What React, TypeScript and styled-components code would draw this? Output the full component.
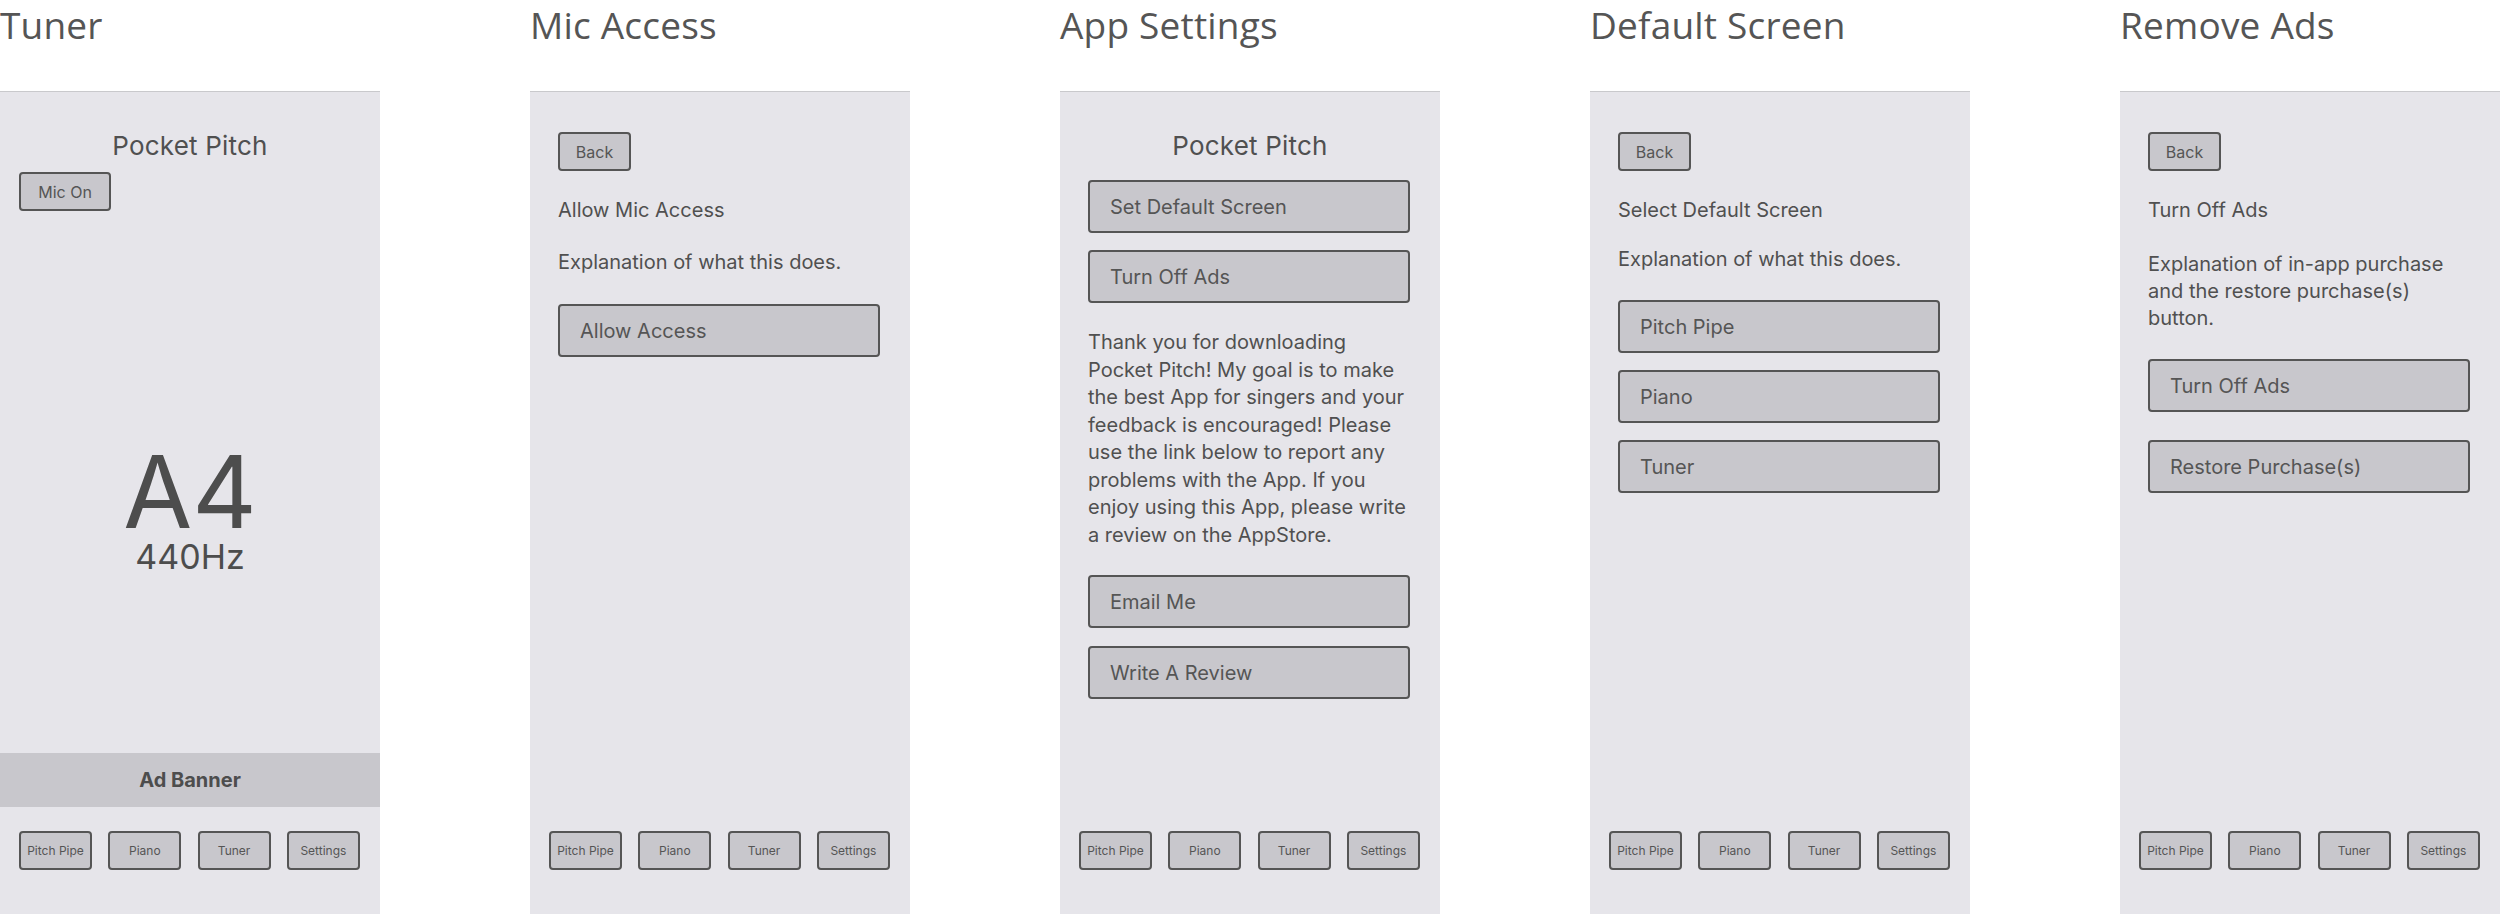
import styled, { createGlobalStyle } from "styled-components";

const GlobalStyle = createGlobalStyle`
  html, body {
    margin: 0;
    padding: 0;
    background: #ffffff;
  }
  body {
    font-family: Inter, "Liberation Sans", sans-serif;
    color: #505050;
  }
`;

const Board = styled.div`
  display: flex;
  gap: 150px;
  align-items: flex-start;
  width: 2500px;
  height: 915px;
  overflow: hidden;
`;

const Column = styled.section`
  width: 380px;
  flex-shrink: 0;
  display: flex;
  flex-direction: column;
`;

const ColumnTitle = styled.h1`
  margin: 0;
  height: 91px;
  font-family: "Open Sans", Lato, sans-serif;
  font-weight: 400;
  font-size: 37px;
  line-height: 50px;
  color: #555555;
  letter-spacing: 0.2px;
`;

const Phone = styled.div`
  height: 823px;
  box-sizing: border-box;
  background: #e6e5ea;
  border-top: 1px solid #c9c9cc;
  display: flex;
  flex-direction: column;
`;

const AppName = styled.div`
  margin-top: 38px;
  text-align: center;
  font-size: 26px;
  line-height: 32px;
  color: #505050;
  letter-spacing: 0.2px;
`;

const SmallButton = styled.div<{ $width: number; $mt: number; $ml: number }>`
  box-sizing: border-box;
  width: ${(p) => p.$width}px;
  height: 39px;
  margin-top: ${(p) => p.$mt}px;
  margin-left: ${(p) => p.$ml}px;
  border: 2px solid #555555;
  border-radius: 4px;
  background: #c8c7cc;
  display: flex;
  align-items: center;
  justify-content: center;
  font-size: 16px;
  color: #555555;
`;

const Content = styled.div`
  display: flex;
  flex-direction: column;
  padding: 0 30px 0 28px;
`;

const Label = styled.p<{ $mt: number }>`
  margin: ${(p) => p.$mt}px 0 0;
  font-size: 20px;
  line-height: 27px;
  color: #505050;
`;

const Paragraph = styled.p<{ $mt: number }>`
  margin: ${(p) => p.$mt}px 0 0;
  font-size: 20px;
  line-height: 27.5px;
  color: #505050;
`;

const BlockButton = styled.div<{ $mt: number }>`
  box-sizing: border-box;
  height: 53px;
  margin-top: ${(p) => p.$mt}px;
  border: 2px solid #555555;
  border-radius: 4px;
  background: #c8c7cc;
  display: flex;
  align-items: center;
  padding-left: 20px;
  font-size: 20px;
  color: #555555;
`;

const NoteReadout = styled.div`
  margin-top: 231px;
  display: flex;
  flex-direction: column;
  align-items: center;
  color: #4d4d4d;
`;

const Note = styled.div`
  font-size: 100px;
  line-height: 100px;
`;

const Frequency = styled.div`
  font-size: 34px;
  line-height: 30px;
`;

const Footer = styled.div`
  margin-top: auto;
  display: flex;
  flex-direction: column;
  gap: 24px;
  padding-bottom: 44px;
`;

const AdBanner = styled.div`
  height: 54px;
  background: #c8c7cc;
  display: flex;
  align-items: center;
  justify-content: center;
  font-size: 20px;
  font-weight: 700;
  color: #4d4d4d;
`;

const NavBar = styled.nav`
  display: flex;
  gap: 16.3px;
  padding: 0 19px;
`;

const NavButton = styled.div`
  box-sizing: border-box;
  width: 73px;
  height: 39px;
  border: 2px solid #555555;
  border-radius: 4px;
  background: #c8c7cc;
  display: flex;
  align-items: center;
  justify-content: center;
  font-size: 12px;
  color: #555555;
`;

const tabs = ["Pitch Pipe", "Piano", "Tuner", "Settings"];

function Nav({ banner }: { banner?: boolean }) {
  return (
    <Footer>
      {banner && <AdBanner>Ad Banner</AdBanner>}
      <NavBar>
        {tabs.map((t) => (
          <NavButton key={t}>{t}</NavButton>
        ))}
      </NavBar>
    </Footer>
  );
}

export default function App() {
  return (
    <>
      <GlobalStyle />
      <Board>
        <Column>
          <ColumnTitle>Tuner</ColumnTitle>
          <Phone>
            <AppName>Pocket Pitch</AppName>
            <SmallButton $width={92} $mt={10} $ml={19}>
              Mic On
            </SmallButton>
            <NoteReadout>
              <Note>A4</Note>
              <Frequency>440Hz</Frequency>
            </NoteReadout>
            <Nav banner />
          </Phone>
        </Column>

        <Column>
          <ColumnTitle>Mic Access</ColumnTitle>
          <Phone>
            <SmallButton $width={73} $mt={40} $ml={28}>
              Back
            </SmallButton>
            <Content>
              <Label $mt={26}>Allow Mic Access</Label>
              <Label $mt={25}>Explanation of what this does.</Label>
              <BlockButton $mt={28}>Allow Access</BlockButton>
            </Content>
            <Nav />
          </Phone>
        </Column>

        <Column>
          <ColumnTitle>App Settings</ColumnTitle>
          <Phone>
            <AppName>Pocket Pitch</AppName>
            <Content>
              <BlockButton $mt={18}>Set Default Screen</BlockButton>
              <BlockButton $mt={17}>Turn Off Ads</BlockButton>
              <Paragraph $mt={26}>
                Thank you for downloading Pocket Pitch! My goal is to make the
                best App for singers and your feedback is encouraged! Please use
                the link below to report any problems with the App. If you enjoy
                using this App, please write a review on the AppStore.
              </Paragraph>
              <BlockButton $mt={26}>Email Me</BlockButton>
              <BlockButton $mt={18}>Write A Review</BlockButton>
            </Content>
            <Nav />
          </Phone>
        </Column>

        <Column>
          <ColumnTitle>Default Screen</ColumnTitle>
          <Phone>
            <SmallButton $width={73} $mt={40} $ml={28}>
              Back
            </SmallButton>
            <Content>
              <Label $mt={26}>Select Default Screen</Label>
              <Label $mt={22}>Explanation of what this does.</Label>
              <BlockButton $mt={27}>Pitch Pipe</BlockButton>
              <BlockButton $mt={17}>Piano</BlockButton>
              <BlockButton $mt={17}>Tuner</BlockButton>
            </Content>
            <Nav />
          </Phone>
        </Column>

        <Column>
          <ColumnTitle>Remove Ads</ColumnTitle>
          <Phone>
            <SmallButton $width={73} $mt={40} $ml={28}>
              Back
            </SmallButton>
            <Content>
              <Label $mt={26}>Turn Off Ads</Label>
              <Label $mt={27}>
                Explanation of in-app purchase and the restore purchase(s)
                button.
              </Label>
              <BlockButton $mt={27}>Turn Off Ads</BlockButton>
              <BlockButton $mt={28}>Restore Purchase(s)</BlockButton>
            </Content>
            <Nav />
          </Phone>
        </Column>
      </Board>
    </>
  );
}
